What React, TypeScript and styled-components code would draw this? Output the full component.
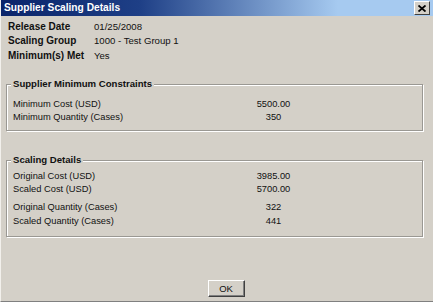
import styled, { createGlobalStyle } from 'styled-components';

const GlobalStyle = createGlobalStyle`
  html, body {
    margin: 0;
    padding: 0;
    background: #d4d0c8;
  }
  body {
    font-family: "Liberation Sans", Arial, sans-serif;
    color: #111;
  }
`;

const Window = styled.div`
  width: 433px;
  height: 302px;
  box-sizing: border-box;
  background: #d4d0c8;
  border-left: 1px solid #f2f0ec;
  border-bottom: 1px solid #808080;
  display: flex;
  flex-direction: column;
`;

const TitleBar = styled.div`
  height: 16px;
  display: flex;
  align-items: center;
  justify-content: space-between;
  padding: 0 3px 0 3px;
  background: linear-gradient(to right, #0a246a 0%, #1e3f86 32%, #a6caf0 78%, #a6caf0 100%);
`;

const Title = styled.span`
  color: #fff;
  font-weight: bold;
  font-size: 10.2px;
  line-height: 16px;
`;

const CloseButton = styled.div`
  width: 16px;
  height: 14px;
  box-sizing: border-box;
  background: #d4d0c8;
  border-top: 1px solid #fff;
  border-left: 1px solid #fff;
  border-right: 1px solid #404040;
  border-bottom: 1px solid #404040;
  display: flex;
  align-items: center;
  justify-content: center;
`;

const InfoGrid = styled.div`
  display: grid;
  grid-template-columns: 86px auto;
  grid-auto-rows: 14.5px;
  align-items: center;
  padding: 0 0 0 7px;
  margin-top: 3px;
`;

const InfoLabel = styled.span`
  font-weight: bold;
  font-size: 10px;
`;

const InfoValue = styled.span`
  font-size: 9.6px;
`;

const GroupBox = styled.fieldset<{ $top: number; $pt: number; $pb: number }>`
  margin: ${(p) => p.$top}px 10px 0 5px;
  padding: ${(p) => p.$pt}px 0 ${(p) => p.$pb}px 0;
  min-width: 0;
  border: 1px solid #9a9893;
  box-shadow: 1px 1px 0 #fff, inset 1px 1px 0 #fff;
`;

const Legend = styled.legend`
  margin-left: 4px;
  padding: 0 2px;
  font-weight: bold;
  font-size: 9.6px;
  line-height: 12px;
  background: #d4d0c8;
`;

const DataRow = styled.div<{ $spaced?: boolean; $h: number }>`
  display: grid;
  grid-template-columns: 226px 69px;
  height: ${(p) => p.$h}px;
  align-items: center;
  padding-left: 6px;
  margin-top: ${(p) => (p.$spaced ? 4.5 : 0)}px;
  font-size: 9.3px;
`;

const DataValue = styled.span`
  text-align: center;
`;

const Footer = styled.div`
  flex: 1;
  display: flex;
  align-items: flex-end;
  justify-content: center;
  padding: 0 0 4px 18px;
`;

const OkButton = styled.div`
  width: 37px;
  height: 17px;
  box-sizing: border-box;
  border-top: 1px solid #fff;
  border-left: 1px solid #fff;
  border-right: 1px solid #404040;
  border-bottom: 1px solid #404040;
  box-shadow: inset -1px -1px 0 #808080;
  display: flex;
  align-items: center;
  justify-content: center;
  font-size: 9.5px;
`;

const info = [
  ['Release Date', '01/25/2008'],
  ['Scaling Group', '1000 - Test Group 1'],
  ['Minimum(s) Met', 'Yes'],
];

const minimums = [
  ['Minimum Cost (USD)', '5500.00'],
  ['Minimum Quantity (Cases)', '350'],
];

const scaling = [
  ['Original Cost (USD)', '3985.00'],
  ['Scaled Cost (USD)', '5700.00'],
  ['Original Quantity (Cases)', '322'],
  ['Scaled Quantity (Cases)', '441'],
];

export default function App() {
  return (
    <>
      <GlobalStyle />
      <Window>
        <TitleBar>
          <Title>Supplier Scaling Details</Title>
          <CloseButton>
            <svg width="8" height="7" viewBox="0 0 8 7">
              <path d="M0.5 0.5 L7.5 6.5 M7.5 0.5 L0.5 6.5" stroke="#000" strokeWidth="1.8" />
            </svg>
          </CloseButton>
        </TitleBar>

        <InfoGrid>
          {info.flatMap(([label, value]) => [
            <InfoLabel key={label}>{label}</InfoLabel>,
            <InfoValue key={label + '-v'}>{value}</InfoValue>,
          ])}
        </InfoGrid>

        <GroupBox $top={15.5} $pt={7} $pb={7}>
          <Legend>Supplier Minimum Constraints</Legend>
          {minimums.map(([label, value]) => (
            <DataRow key={label} $h={13}>
              <span>{label}</span>
              <DataValue>{value}</DataValue>
            </DataRow>
          ))}
        </GroupBox>

        <GroupBox $top={23} $pt={3} $pb={8}>
          <Legend>Scaling Details</Legend>
          {scaling.map(([label, value], i) => (
            <DataRow key={label} $h={13.5} $spaced={i === 2}>
              <span>{label}</span>
              <DataValue>{value}</DataValue>
            </DataRow>
          ))}
        </GroupBox>

        <Footer>
          <OkButton>OK</OkButton>
        </Footer>
      </Window>
    </>
  );
}
